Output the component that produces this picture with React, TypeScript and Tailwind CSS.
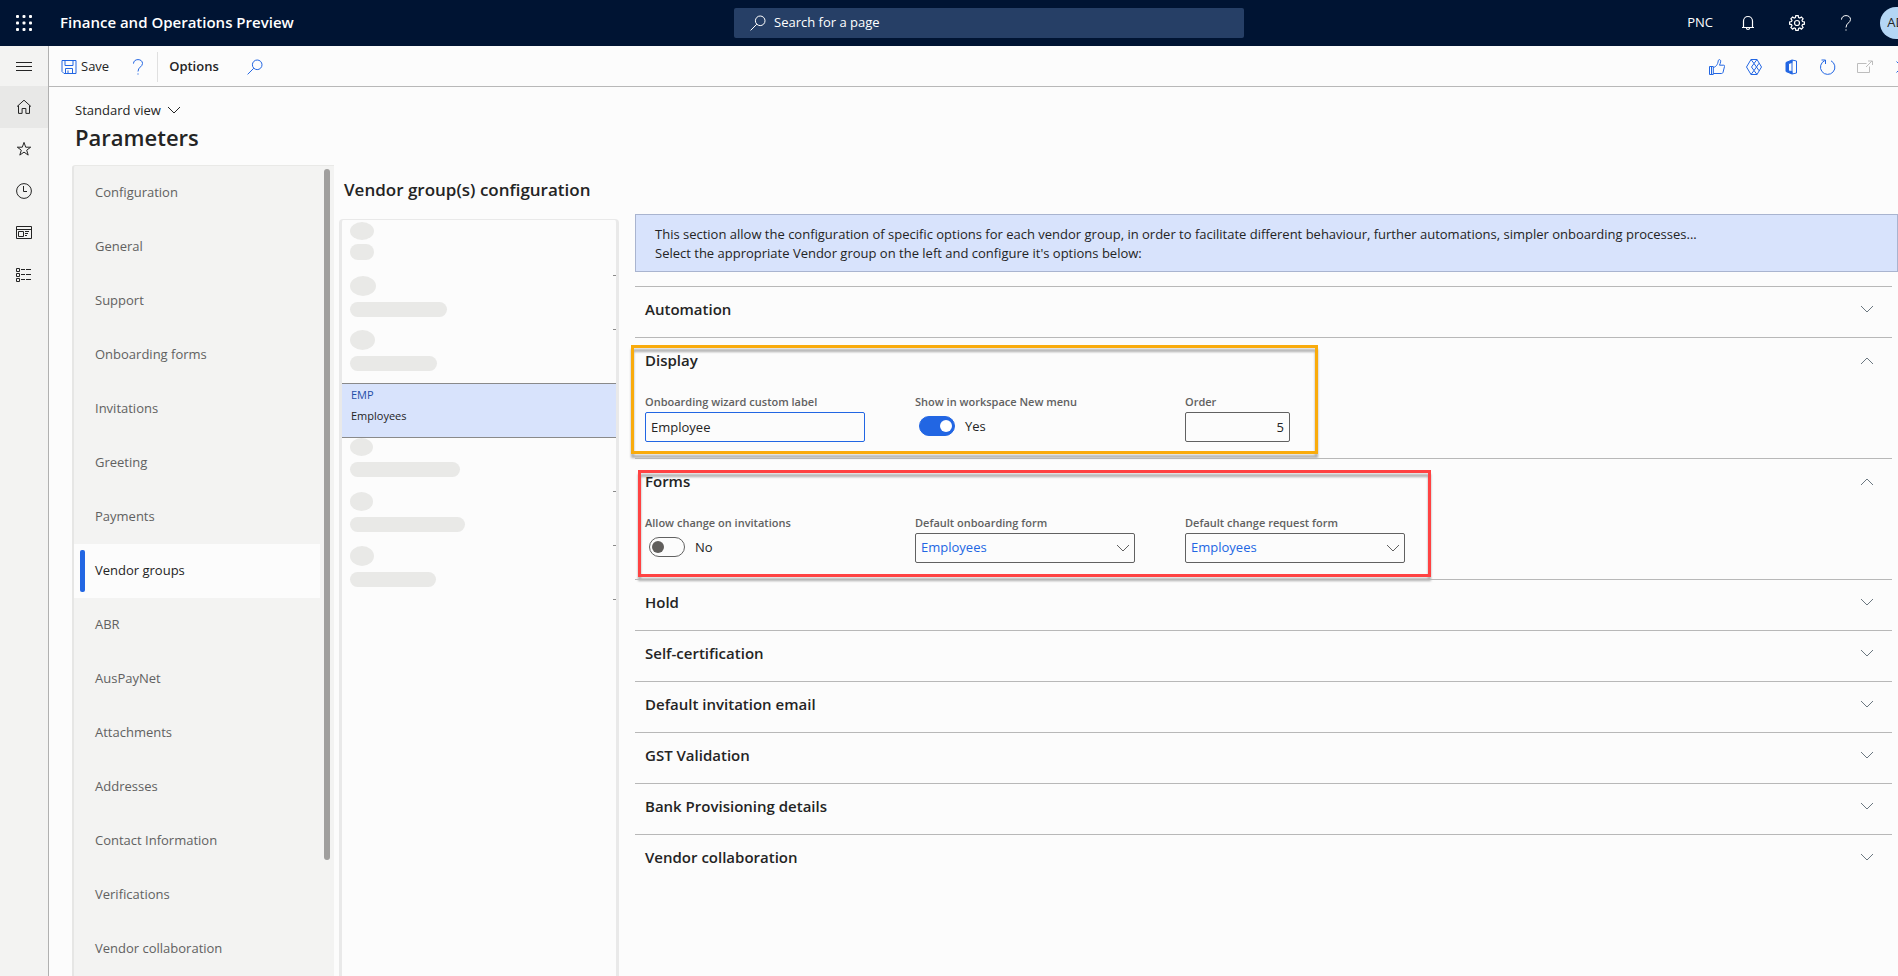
import React from 'react';

const navItems = [
  'Configuration',
  'General',
  'Support',
  'Onboarding forms',
  'Invitations',
  'Greeting',
  'Payments',
  'Vendor groups',
  'ABR',
  'AusPayNet',
  'Attachments',
  'Addresses',
  'Contact Information',
  'Verifications',
  'Vendor collaboration',
];

const closedSections = [
  'Hold',
  'Self-certification',
  'Default invitation email',
  'GST Validation',
  'Bank Provisioning details',
  'Vendor collaboration',
];

type IconProps = { children: React.ReactNode; size?: number; className?: string };

const Icon = ({ children, size = 16, className = '' }: IconProps) => (
  <svg
    width={size}
    height={size}
    viewBox="0 0 16 16"
    fill="none"
    stroke="currentColor"
    strokeWidth="1"
    className={`shrink-0 ${className}`}
    aria-hidden="true"
  >
    {children}
  </svg>
);

const SearchIcon = ({ className = '' }: { className?: string }) => (
  <Icon className={className}>
    <circle cx="10.2" cy="5.8" r="4.8" />
    <path d="M6.8 9.2L.6 15.4" />
  </Icon>
);

const QuestionIcon = ({ className = '' }: { className?: string }) => (
  <Icon className={className}>
    <path d="M3.5 4.6C3.5 2.2 5.4.6 8 .6s4.5 1.5 4.5 3.9c0 3.2-4.5 3.6-4.5 8" />
    <path d="M7.4 15h1.2" strokeWidth="1.2" />
  </Icon>
);

const Chevron = ({ up = false, className = '' }: { up?: boolean; className?: string }) => (
  <svg width="14" height="8" viewBox="0 0 14 8" fill="none" stroke="currentColor" className={className} aria-hidden="true">
    <path d={up ? 'M1 7l6-6 6 6' : 'M1 1l6 6 6-6'} />
  </svg>
);

const railIcons = [
  {
    label: 'Home',
    icon: (
      <Icon>
        <path d="M1 7.6L8 1.2l7 6.4M2.5 6.5v7.9h3.6V9.5h3.8v4.9h3.6V6.5" />
      </Icon>
    ),
  },
  {
    label: 'Favorites',
    icon: (
      <Icon>
        <path d="M8 1.4l1.7 4.8h5l-4 3 1.5 4.9L8 11.1l-4.2 3 1.5-4.9-4-3h5z" />
      </Icon>
    ),
  },
  {
    label: 'Recent',
    icon: (
      <Icon>
        <circle cx="8" cy="8" r="7.4" />
        <path d="M7.5 3v5.5H11" />
      </Icon>
    ),
  },
  {
    label: 'Workspaces',
    icon: (
      <Icon>
        <path d="M.5 1.5h15v12H.5zM.5 4.5h15M2.5 6.5h5v5h-5zM9 6.5h4M9 8.5h3M9 10.5h2" />
      </Icon>
    ),
  },
  {
    label: 'Modules',
    icon: (
      <Icon>
        <path d="M.5 1.5h3v3h-3zM.5 6.5h3v3h-3zM.5 11.5h3v3h-3zM5 2.5h4M10 2.5h5M5 7.5h4M10 7.5h5M5 12.5h4M10 12.5h5" />
      </Icon>
    ),
  },
];

const actionIcons = [
  {
    label: 'Feedback',
    icon: (
      <Icon>
        <path d="M.5 7.5h3.8v8H.5zM2.5 7.5v8M4.3 8.5c2.6-.7 4.4-2.6 5-6.9.2-1.5 2.5-1.2 2.4.6-.1 1.5-.7 2.8-1.2 4h4.2c1.2 0 .9 1 .7 1.7l-1.3 5.2c-.3 1.2-.9 1.4-1.9 1.4H4.3" />
      </Icon>
    ),
  },
  {
    label: 'Power Apps',
    icon: (
      <Icon>
        <path d="M5 .5h6L15.5 8 11 15.5H5L.5 8zM5 .5l3 4 3-4M8 4.5L10.5 8 8 11.5 5.500 8zM5 15.5l3-4 3 4M10.5 8L13 4.300M10.500 8l2.500 3.700" />
      </Icon>
    ),
  },
  {
    label: 'Open in Microsoft Office',
    icon: (
      <Icon>
        <path d="M9 1L3 3.5v9L9 15v-2.5l-3.500-.5V4.500L9 3.500z" fill="currentColor" />
        <path d="M9 1l4.5 1v12L9 15z" />
      </Icon>
    ),
  },
  {
    label: 'Refresh',
    icon: (
      <Icon>
        <path d="M11 1.8A7.2 7.2 0 1 1 4.8 1.6M1.5 1h4v4" />
      </Icon>
    ),
  },
];

const groupRows = [
  { first: 'w-6 h-[18px]', second: 'w-6 h-4 mt-1', tick: false },
  { first: 'w-[26px] h-5', second: 'w-[97px] h-[15px] mt-[6px]', tick: true },
  { first: 'w-[25px] h-5', second: 'w-[87px] h-[15px] mt-[6px]', tick: true },
];

const lowerGroupRows = [
  { first: 'w-[23px] h-[18px]', second: 'w-[110px] h-[15px] mt-[6px]', tick: false },
  { first: 'w-[23px] h-[19px]', second: 'w-[115px] h-[15px] mt-[6px]', tick: true },
  { first: 'w-[24px] h-5', second: 'w-[86px] h-[15px] mt-[6px]', tick: true },
  { first: '', second: '', tick: true },
];

const HiddenGroup = ({ first, second, tick }: { first: string; second: string; tick: boolean }) => (
  <li className="flex h-[54px] justify-between">
    <div className="pt-px pl-2">
      {first && <div className={`rounded-[50%] bg-[#e9e9e7] ${first}`} />}
      {second && <div className={`rounded-full bg-[#e9e9e7] ${second}`} />}
    </div>
    {tick && <div className="h-px w-[3px] bg-[#8a8a8a]" />}
  </li>
);

const Section = ({ title, open = false, children }: { title: string; open?: boolean; children?: React.ReactNode }) => (
  <section className={`relative mr-[6px] border-t border-[#b8b8b8] ${open ? 'h-[121px]' : ''}`}>
    <h3>
      <button
        aria-expanded={open}
        className={`flex w-full items-center justify-between pr-[18px] pl-[10px] text-left text-[15px] font-semibold text-[#242424] ${
          open ? 'h-[45px]' : 'h-[50px] pb-[6px]'
        }`}
      >
        {title}
        <Chevron up={open} className="text-[#6b7780]" />
      </button>
    </h3>
    {children}
  </section>
);

const FieldLabel = ({ htmlFor, children }: { htmlFor: string; children: React.ReactNode }) => (
  <label htmlFor={htmlFor} className="block h-[18px] text-[11px] leading-4 font-semibold text-[#616161]">
    {children}
  </label>
);

const Toggle = ({ id, label, on }: { id: string; label: string; on: boolean }) => (
  <div className="w-[220px]">
    <FieldLabel htmlFor={id}>{label}</FieldLabel>
    <div className="flex items-center gap-[10px] pt-1 pl-1 text-[13px] leading-5">
      <input
        id={id}
        type="checkbox"
        role="switch"
        defaultChecked={on}
        className="flex h-5 w-9 appearance-none items-center rounded-full border border-[#616161] px-[2px] before:size-3 before:rounded-full before:bg-[#605e5c] checked:justify-end checked:border-[#2266e3] checked:bg-[#2266e3] checked:before:bg-white"
      />
      <span>{on ? 'Yes' : 'No'}</span>
    </div>
  </div>
);

const FormSelect = ({ id, label }: { id: string; label: string }) => (
  <div className="w-[220px]">
    <FieldLabel htmlFor={id}>{label}</FieldLabel>
    <div className="relative">
      <select
        id={id}
        className="h-[30px] w-full appearance-none rounded-[2px] border border-[#616161] pl-[5px] text-[13px] text-[#2266e3]"
      >
        <option>Employees</option>
      </select>
      <Chevron className="pointer-events-none absolute top-[11px] right-[5px] text-[#616161]" />
    </div>
  </div>
);

const TopBar = () => (
  <header className="flex h-[46px] shrink-0 items-center bg-[#001433] text-white">
    <div className="flex flex-[734] items-center">
      <button aria-label="App launcher" className="flex w-12 justify-center">
        <svg width="16" height="16" viewBox="0 0 16 16" fill="currentColor" aria-hidden="true">
          {[0, 6.5, 13].map((y) => [0, 6.5, 13].map((x) => <rect key={`${x}-${y}`} x={x} y={y} width="3" height="3" rx="1" />))}
        </svg>
      </button>
      <span className="pb-[2px] pl-3 text-[15px] leading-5 font-semibold">Finance and Operations Preview</span>
    </div>
    <label className="flex h-[30px] w-[510px] items-center gap-2 rounded-[2px] bg-[#263f66] pl-4">
      <SearchIcon />
      <input
        type="text"
        aria-label="Search for a page"
        placeholder="Search for a page"
        className="flex-1 bg-transparent text-[13px] outline-none placeholder:text-white"
      />
    </label>
    <div className="flex flex-[654] items-center justify-end overflow-hidden">
      <span className="text-[13px]">PNC</span>
      <button aria-label="Notifications" className="ml-[27px]">
        <Icon>
          <path d="M2 12.5h12M3.5 12.5V6a4.5 4.5 0 0 1 9 0v6.5M6.5 13a1.5 1.5 0 0 0 3 0" strokeWidth="1.2" />
        </Icon>
      </button>
      <button aria-label="Settings" className="ml-[33px]">
        <Icon>
          <path
            d="M6.8.7h2.4l.4 1.9 1.2.5 1.6-1.1 1.7 1.7L13 5.3l.5 1.2 1.9.4v2.3l-1.9.4-.5 1.2 1.1 1.6-1.7 1.7-1.6-1.1-1.2.5-.4 1.9H6.8l-.4-1.9-1.2-.5-1.6 1.1-1.7-1.7L3 10.8l-.5-1.2-1.9-.4V6.9l1.9-.4L3 5.3 1.900 3.700 3.600 2l1.600 1.100 1.200-.5z"
            strokeWidth="1.2"
          />
          <circle cx="8" cy="8" r="2.5" strokeWidth="1.2" />
        </Icon>
      </button>
      <button aria-label="Help" className="ml-[33px]">
        <QuestionIcon />
      </button>
      <button
        aria-label="Account"
        className="-mr-[14px] ml-[26px] flex size-8 shrink-0 items-center justify-center rounded-full bg-[#b4d6f5] text-[13px] text-[#242424]"
      >
        AD
      </button>
    </div>
  </header>
);

const Rail = () => (
  <nav aria-label="Main" className="flex w-[49px] shrink-0 flex-col border-r border-[#b0b0b0] bg-[#f3f3f2] text-[#242424]">
    <button aria-label="Expand navigation" className="flex h-10 items-center justify-center">
      <Icon>
        <path d="M0 4.5h16M0 8.5h16M0 12.5h16" />
      </Icon>
    </button>
    {railIcons.map((item) => (
      <button
        key={item.label}
        aria-label={item.label}
        className={`flex h-[42px] items-center justify-center ${item.label === 'Home' ? 'bg-[#e8e8e7]' : ''}`}
      >
        {item.icon}
      </button>
    ))}
  </nav>
);

const ActionBar = () => (
  <div className="flex h-[41px] shrink-0 items-center overflow-hidden border-b border-[#b8b8b8] pt-[2px] text-[13px]">
    <button className="ml-3 flex items-center gap-1">
      <Icon className="text-[#2266e3]">
        <path d="M1 1.5h14v13H3L1 12.5zM4 1.5v5h8v-5M4.5 14.5v-5h7v5M7 11.5v3" />
      </Icon>
      Save
    </button>
    <button aria-label="Help" className="ml-[21px] text-[#2266e3]">
      <QuestionIcon />
    </button>
    <div className="ml-[11px] h-[30px] w-px bg-[#e0e0e0]" />
    <button className="ml-[11px] font-semibold">Options</button>
    <button aria-label="Find action" className="ml-[28px] text-[#2266e3]">
      <SearchIcon />
    </button>
    <div className="ml-auto flex items-center gap-[21px] text-[#2266e3]">
      {actionIcons.map((item) => (
        <button key={item.label} aria-label={item.label}>
          {item.icon}
        </button>
      ))}
      <button aria-label="Open in new window" disabled className="text-[#bdbdbd]">
        <Icon>
          <path d="M9.5 4.5H.5v9h12v-6M9 8l6-6M11 2h4.5v4" />
        </Icon>
      </button>
      <button aria-label="Close" className="-mr-3">
        <Icon>
          <path d="M2.5 2.5l11 11M13.5 2.5l-11 11" />
        </Icon>
      </button>
    </div>
  </div>
);

const SideTabs = () => (
  <div className="flex w-[262px] shrink-0 overflow-hidden rounded-tl-[3px] border-t border-l-2 border-t-[#e9e9e7] border-l-[#e6e6e5] bg-[#f3f3f2]">
    <div role="tablist" aria-orientation="vertical" className="flex flex-1 flex-col text-[13px]">
      {navItems.map((item) => {
        const active = item === 'Vendor groups';
        return (
          <button
            key={item}
            role="tab"
            aria-selected={active}
            className={`flex h-[54px] shrink-0 items-center text-left ${
              active ? 'bg-[#fcfcfc] pl-[6px] text-[#242424]' : 'pl-[21px] text-[#616161]'
            }`}
          >
            {active && <span className="mr-[10px] h-[42px] w-[5px] rounded-[2px] bg-[#2266e3]" />}
            {item}
          </button>
        );
      })}
    </div>
    <div className="mt-[3px] mr-1 ml-1 h-[691px] w-[6px] rounded-full bg-[#a09f9e]" />
  </div>
);

const GroupList = () => (
  <div className="flex w-[280px] shrink-0 flex-col">
    <h2 className="h-[54px] pt-[13px] pl-[5px] text-[17px] leading-6 font-semibold">Vendor group(s) configuration</h2>
    <ul className="flex-1 rounded-t-[4px] border-x-[3px] border-t border-[#e9e9e9] pt-px">
      {groupRows.map((row, i) => (
        <HiddenGroup key={i} {...row} />
      ))}
      <li className="-mb-px">
        <button className="flex h-[55px] w-full flex-col border-y border-[#8a8a8a] bg-[#d8e3fc] pt-[3px] pl-[9px] text-left text-[11px]">
          <span className="h-[21px] leading-4 text-[#1f4fa8]">EMP</span>
          <span className="leading-4">Employees</span>
        </button>
      </li>
      {lowerGroupRows.map((row, i) => (
        <HiddenGroup key={i} {...row} />
      ))}
    </ul>
  </div>
);

const Details = () => (
  <div className="min-w-0 flex-1 pt-[49px]">
    <p className="mb-[14px] border border-[#a9b4cf] bg-[#d8e3fc] pt-[10px] pb-2 pl-[19px] text-[13px] leading-[19px]">
      This section allow the configuration of specific options for each vendor group, in order to facilitate different
      behaviour, further automations, simpler onboarding processes...
      <br />
      Select the appropriate Vendor group on the left and configure it's options below:
    </p>

    <Section title="Automation" />

    <Section title="Display" open>
      <div className="flex gap-[50px] pt-[11px] pl-[10px]">
        <div className="w-[220px]">
          <FieldLabel htmlFor="custom-label">Onboarding wizard custom label</FieldLabel>
          <input
            id="custom-label"
            type="text"
            defaultValue="Employee"
            className="h-[30px] w-full rounded-[2px] border border-[#2266e3] px-[5px] text-[13px]"
          />
        </div>
        <Toggle id="show-in-menu" label="Show in workspace New menu" on />
        <div className="w-[105px]">
          <FieldLabel htmlFor="order">Order</FieldLabel>
          <input
            id="order"
            type="text"
            inputMode="numeric"
            defaultValue="5"
            className="h-[30px] w-full rounded-[2px] border border-[#616161] px-[5px] text-right text-[13px]"
          />
        </div>
      </div>
      <div className="pointer-events-none absolute top-[7px] -left-1 h-[109px] w-[687px] border-[3px] border-[#f9ab0c] drop-shadow-[0_4px_1px_rgba(0,0,0,0.3)]" />
    </Section>

    <Section title="Forms" open>
      <div className="flex gap-[50px] pt-[11px] pl-[10px]">
        <Toggle id="allow-change" label="Allow change on invitations" on={false} />
        <FormSelect id="onboarding-form" label="Default onboarding form" />
        <FormSelect id="change-form" label="Default change request form" />
      </div>
      <div className="pointer-events-none absolute top-[11px] left-[3px] h-[107px] w-[793px] border-[3px] border-[#ff4343] drop-shadow-[0_4px_1px_rgba(0,0,0,0.3)]" />
    </Section>

    {closedSections.map((title) => (
      <Section key={title} title={title} />
    ))}
  </div>
);

const App: React.FC = () => {
  return (
    <div className="flex h-screen flex-col overflow-hidden bg-[#fcfcfc] font-['Open_Sans','Noto_Sans',sans-serif] text-[#242424]">
      <TopBar />
      <div className="flex min-h-0 flex-1">
        <Rail />
        <main className="flex min-w-0 flex-1 flex-col">
          <ActionBar />
          <div className="h-[78px] shrink-0 pt-[13px] pl-[26px]">
            <button className="flex items-center gap-[6px] text-[13px] leading-5">
              Standard view
              <Chevron />
            </button>
            <h1 className="text-[22px] leading-[34px] font-semibold">Parameters</h1>
          </div>
          <div className="flex min-h-0 flex-1 pl-[23px]">
            <SideTabs />
            <div className="w-[5px] shrink-0" />
            <GroupList />
            <div className="w-4 shrink-0" />
            <Details />
          </div>
        </main>
      </div>
    </div>
  );
};

export default App;
